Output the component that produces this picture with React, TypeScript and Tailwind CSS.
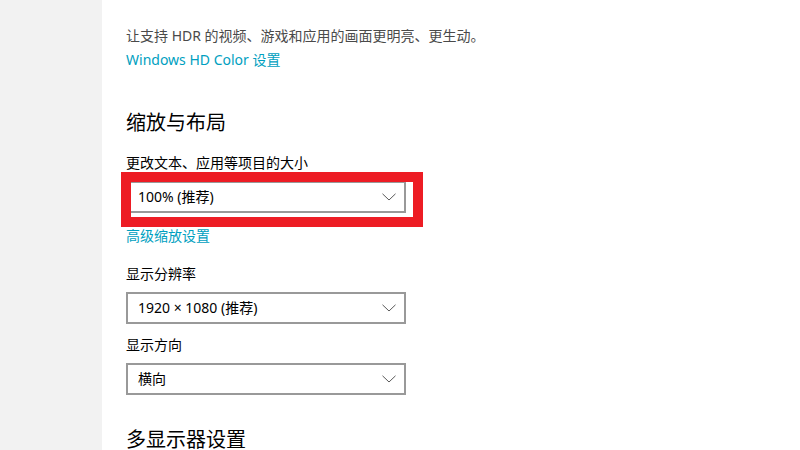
import React from "react";

const font = { fontFamily: '"Segoe UI", "Noto Sans", "Noto Sans CJK SC", sans-serif' };

function Chevron() {
  return (
    <svg width="14" height="8" viewBox="0 0 14 8" fill="none">
      <path d="M0.5 0.8 L7 7 L13.5 0.8" stroke="#5a5a5a" strokeWidth="1" />
    </svg>
  );
}

function Dropdown({ value }: { value: string }) {
  return (
    <div className="w-[280px] h-[32px] border-2 border-[#999999] bg-white flex items-center justify-between pl-[10px] pr-[8px]">
      <span className="text-[14px] leading-[20px] text-black">{value}</span>
      <Chevron />
    </div>
  );
}

export default function App() {
  return (
    <div className="w-[800px] h-[450px] overflow-hidden flex bg-white" style={font}>
      <div className="w-[102px] h-full bg-[#f2f2f2] shrink-0" />
      <div className="relative flex-1 flex flex-col pl-[24px] pt-[26px]">
        <div className="text-[14px] leading-[20px] text-[#4a4a4a]">让支持 HDR 的视频、游戏和应用的画面更明亮、更生动。</div>
        <div className="mt-[4px] text-[14px] leading-[20px] text-[#00a0c0]">Windows HD Color 设置</div>
        <div className="mt-[39px] text-[20px] leading-[28px] text-black">缩放与布局</div>
        <div className="mt-[16px] text-[14px] leading-[20px] text-black">更改文本、应用等项目的大小</div>
        <div className="mt-[8px]"><Dropdown value="100% (推荐)" /></div>
        <div className="mt-[13px] text-[14px] leading-[20px] text-[#00a0c0]">高级缩放设置</div>
        <div className="mt-[18px] text-[14px] leading-[20px] text-black">显示分辨率</div>
        <div className="mt-[8px]"><Dropdown value="1920 × 1080 (推荐)" /></div>
        <div className="mt-[11px] text-[14px] leading-[20px] text-black">显示方向</div>
        <div className="mt-[8px]"><Dropdown value="横向" /></div>
        <div className="mt-[31px] text-[20px] leading-[28px] text-black">多显示器设置</div>
        <div className="absolute left-[19px] top-[172px] w-[302px] h-[55px] border-[10px] border-[#ed1c24]" />
      </div>
    </div>
  );
}
